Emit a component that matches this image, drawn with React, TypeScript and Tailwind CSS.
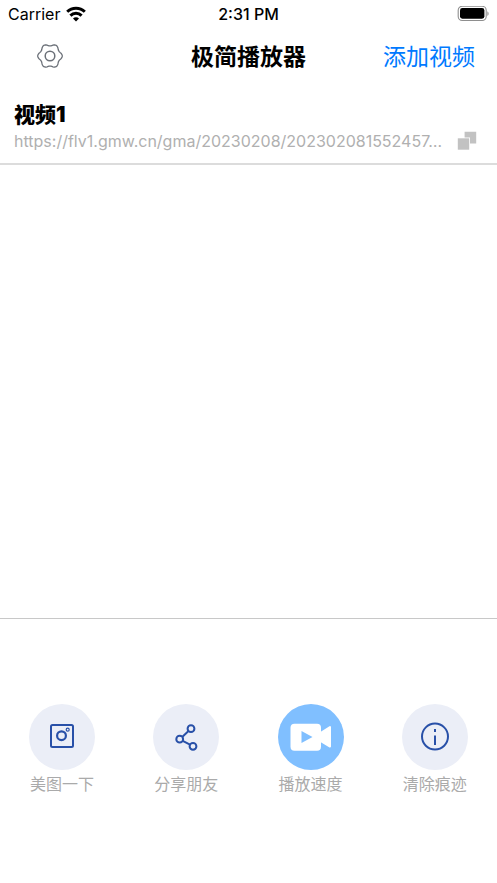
import type { ReactNode } from 'react'

type Video = { id: number; title: string; url: string }

const videos: Video[] = [
  { id: 1, title: '视频1', url: 'https://flv1.gmw.cn/gma/20230208/202302081552457…' },
]

// outline of the six-lobed settings gear, centred on 14,13
const gearPoints = Array.from({ length: 72 }, (_, i) => {
  const a = (i * 5 * Math.PI) / 180
  const r = 11.2 + 1.1 * Math.cos(6 * a)
  return `${(14 + r * Math.cos(a)).toFixed(2)},${(13 + r * Math.sin(a)).toFixed(2)}`
}).join(' ')

function GearIcon() {
  return (
    <svg className="w-7 h-7" viewBox="0 0 28 28" fill="none" stroke="#6b7078" strokeWidth="1.3" strokeLinejoin="round">
      <polygon points={gearPoints} />
      <circle cx="14" cy="13" r="4.8" strokeWidth="1.5" />
    </svg>
  )
}

function WifiIcon() {
  return (
    <svg className="w-5 h-4" viewBox="0 0 20 16" fill="none" stroke="#000" strokeWidth="3">
      <path d="M1.2 5.8a12.6 12.6 0 0 1 17.6 0" />
      <path d="M4.4 9.6a7.9 7.9 0 0 1 11.2 0" />
      <path d="M10 15.4l-3-3a4.2 4.2 0 0 1 6 0z" fill="#000" stroke="none" />
    </svg>
  )
}

function BatteryIcon() {
  return (
    <svg className="w-8 h-4" viewBox="0 0 32 16">
      <rect x="1.2" y="0.3" width="28" height="14.2" rx="4" fill="none" stroke="#8e8e8e" strokeWidth="1.1" />
      <rect x="3" y="2.1" width="24.4" height="10.6" rx="2.4" fill="#000" />
      <path d="M30.4 5.2v4.8c1.6-.8 1.6-4 0-4.8z" fill="#8e8e8e" />
    </svg>
  )
}

function CopyIcon() {
  return (
    <svg className="w-5 h-5" viewBox="0 0 20 20" fill="#c2c2c2">
      <path d="M7.6 0.8h11.6v11.8h-6.2v-6.2h-5.4z" />
      <rect x="0.8" y="7.3" width="11.4" height="11.4" />
    </svg>
  )
}

function Action({ label, color, children }: { label: string; color: string; children: ReactNode }) {
  return (
    <button type="button" className="flex flex-col items-center">
      <span className={`w-[66px] h-[66px] rounded-full ${color}`}>
        <svg className="w-full h-full" viewBox="0 0 66 66" fill="none" stroke="#2850a8" strokeWidth="2">
          {children}
        </svg>
      </span>
      <span className="mt-0.5 text-base leading-6 text-[#aaaaaa]">{label}</span>
    </button>
  )
}

export default function App() {
  return (
    <div className="min-h-screen flex flex-col bg-white text-black font-['Inter','Noto_Sans_CJK_SC',sans-serif]">
      {/* Status bar */}
      <div className="h-7 grid grid-cols-3 items-center px-2 text-base">
        <div className="flex items-center gap-1.5">
          <span>Carrier</span>
          <WifiIcon />
        </div>
        <div className="text-center font-medium">2:31 PM</div>
        <div className="flex justify-end">
          <BatteryIcon />
        </div>
      </div>

      {/* Nav bar */}
      <header className="h-[58px] grid grid-cols-3 items-center pl-9 pr-[22px] text-[23px]">
        <button type="button" aria-label="设置" className="justify-self-start">
          <GearIcon />
        </button>
        <h1 className="justify-self-center whitespace-nowrap font-bold -ml-3.5">极简播放器</h1>
        <button type="button" className="justify-self-end whitespace-nowrap text-[#007aff]">添加视频</button>
      </header>

      <main className="flex-1">
        <ul>
          {videos.map(v => (
            <li key={v.id} className="flex items-end gap-2 pt-[15px] pb-2.5 pl-3.5 pr-5 border-b-2 border-[#dcdcdc]">
              <div className="flex-1 min-w-0">
                <h2 className="text-[21px] leading-7 font-black">{v.title}</h2>
                <p className="truncate text-base leading-6 text-[#b0b0b0]">{v.url}</p>
              </div>
              <button type="button" aria-label="复制" className="mb-0.5">
                <CopyIcon />
              </button>
            </li>
          ))}
        </ul>
      </main>

      {/* Bottom actions */}
      <footer className="grid grid-cols-4 pt-[85px] pb-[87px] border-t border-[#c8c8c8]">
        <Action label="美图一下" color="bg-[#ebeef7]">
          <rect x="22" y="21" width="22" height="22" rx="1.5" />
          <circle cx="32.5" cy="31.7" r="4.4" strokeWidth="2.2" />
          <circle cx="38.7" cy="25.7" r="1.5" strokeWidth="1.2" />
        </Action>
        <Action label="分享朋友" color="bg-[#ebeef7]">
          <circle cx="38" cy="24.7" r="3.4" />
          <circle cx="26.7" cy="35.2" r="3.4" />
          <circle cx="40" cy="42.3" r="3.4" />
          <path d="M35.5 27l-6.3 5.9M29.7 36.9l7.3 3.7" />
        </Action>
        <Action label="播放速度" color="bg-[#80bfff]">
          <rect x="12.5" y="19.7" width="30.5" height="27" rx="4" fill="#fff" stroke="none" />
          <path d="M42.5 29l9.5-6v19.6l-9.5-5.6z" fill="#fff" stroke="#fff" strokeLinejoin="round" />
          <path d="M23.5 27v12l11-6z" fill="#80bfff" stroke="none" />
        </Action>
        <Action label="清除痕迹" color="bg-[#ebeef7]">
          <circle cx="33" cy="32.6" r="13" />
          <path d="M33 31.5v9.5M33 25v3" />
        </Action>
      </footer>
    </div>
  )
}
